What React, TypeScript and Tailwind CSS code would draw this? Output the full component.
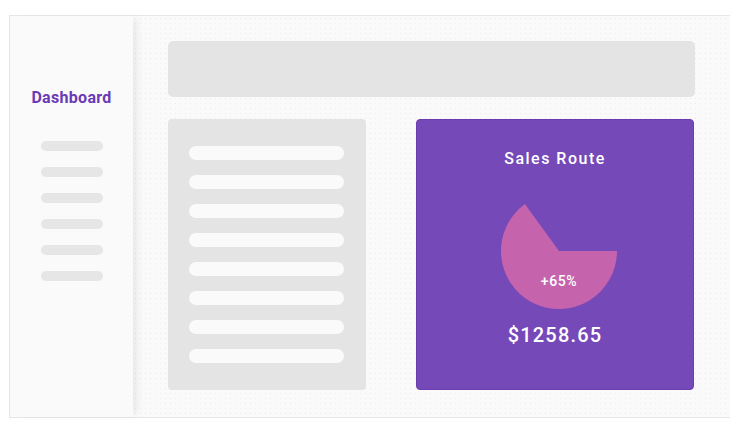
import * as React from 'react';

const sideLines = [0, 1, 2, 3, 4, 5];
const listLines = [0, 1, 2, 3, 4, 5, 6, 7];

function SalesPie() {
  // 65% slice starting at 3 o'clock, running clockwise
  return (
    <div className="relative ml-[8px] h-[120px] w-[120px]">
      <svg width="120" height="120" viewBox="0 0 120 120">
        <path d="M60 60 L118 60 A58 58 0 1 1 25.9 13.1 Z" fill="#c564ad" />
      </svg>
      <div className="absolute inset-x-0 top-[80px] text-center text-[14px] font-medium leading-5 tracking-[0.6px] text-white">
        +65%
      </div>
    </div>
  );
}

export default function App() {
  return (
    <div
      className="h-[433px] w-[730px] overflow-hidden bg-white pl-[9px] pt-[15px]"
      style={{ fontFamily: 'Roboto, "Noto Sans", sans-serif' }}
    >
      <div className="flex h-[403px] border-y border-l border-[#e6e6e6]">
        {/* Sidebar */}
        <aside className="relative z-10 flex w-[123px] shrink-0 flex-col items-center bg-[#fafafa] pt-[72px] shadow-[7px_0_7px_-3px_rgba(0,0,0,0.07)]">
          <h2 className="text-[16px] font-bold leading-5 tracking-[0.3px] text-[#6a3bb6]">Dashboard</h2>
          <div className="mt-[33px] flex flex-col gap-[16px]">
            {sideLines.map((i) => (
              <div key={i} className="h-[10px] w-[62px] rounded-full bg-[#e6e6e6]" />
            ))}
          </div>
        </aside>

        {/* Main */}
        <main className="flex flex-1 flex-col bg-[#fafafa] bg-[radial-gradient(circle,#ebebeb_0.6px,transparent_0.8px)] bg-[size:5px_5px] pl-[35px] pr-[35px] pt-[25px]">
          <div className="h-[56px] w-[527px] rounded-[5px] bg-[#e4e4e4]" />

          <div className="mt-[22px] flex gap-[50px]">
            {/* List card */}
            <div className="flex h-[271px] w-[198px] flex-col gap-[15px] rounded-[4px] bg-[#e4e4e4] pl-[21px] pt-[27px]">
              {listLines.map((i) => (
                <div key={i} className="h-[14px] w-[155px] rounded-full bg-[#fafafa]" />
              ))}
            </div>

            {/* Sales card */}
            <div className="flex h-[271px] w-[278px] flex-col items-center rounded-[4px] border border-[#6c3db0] bg-[#7649b9] pt-[27px] text-white">
              <h3 className="text-[16px] font-medium leading-6 tracking-[1.5px]">Sales Route</h3>
              <div className="mt-[20px]">
                <SalesPie />
              </div>
              <div className="mt-[10px] text-[20px] font-medium leading-7 tracking-[1.2px]">$1258.65</div>
            </div>
          </div>
        </main>
      </div>
    </div>
  );
}
